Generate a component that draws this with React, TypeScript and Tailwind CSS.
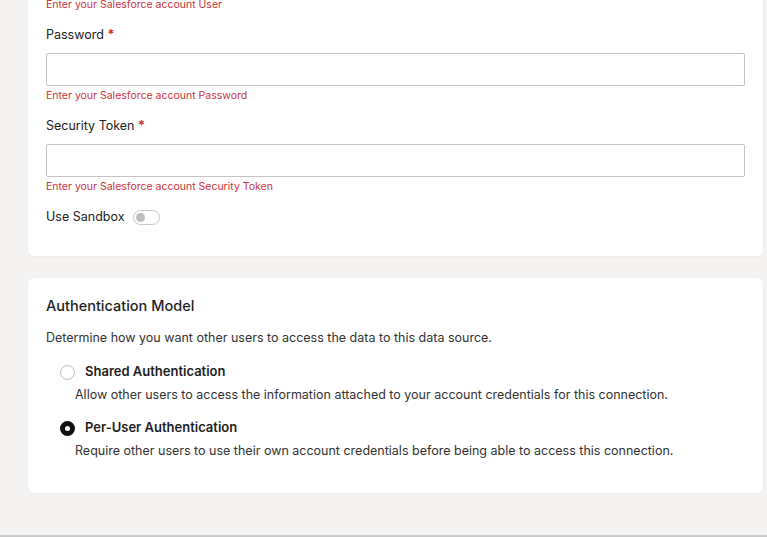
import React, { useState } from 'react'

const FIELDS = [
  { label: 'Password', help: 'Enter your Salesforce account Password' },
  { label: 'Security Token', help: 'Enter your Salesforce account Security Token' },
]

const AUTH_OPTIONS = [
  {
    id: 'shared',
    title: 'Shared Authentication',
    desc: 'Allow other users to access the information attached to your account credentials for this connection.',
  },
  {
    id: 'per-user',
    title: 'Per-User Authentication',
    desc: 'Require other users to use their own account credentials before being able to access this connection.',
  },
]

function Field({ label, help }: { label: string; help: string }) {
  return (
    <div className="mt-[16px]">
      <label className="block text-[12.5px] leading-[16px] text-[#222]">
        {label} <span className="text-[#d02b2b] font-bold">*</span>
      </label>
      <input className="mt-[10px] block w-full h-[33px] border border-[#c4c4c4] rounded-[2px] bg-white px-2 text-[13px] outline-none" />
      <p className="mt-[3px] text-[10.5px] leading-[13px] text-[#c8333c]">{help}</p>
    </div>
  )
}

export default function App() {
  const [sandbox, setSandbox] = useState(false)
  const [auth, setAuth] = useState('per-user')

  return (
    <div className="h-[537px] bg-[#f4f3f1] border-b-2 border-[#c9c9c9] overflow-hidden font-['Inter',sans-serif]">
      <div className="pl-[28px] pr-[4px]">

        {/* ── Connection details ── */}
        <div className="bg-white rounded-b-[6px] shadow-[0_1px_3px_rgba(0,0,0,0.04)] px-[18px] pb-[31px]">
          <p className="-mt-[2px] text-[10.5px] leading-[13px] text-[#c8333c]">Enter your Salesforce account User</p>
          {FIELDS.map(f => <Field key={f.label} {...f} />)}

          <div className="mt-[16px] flex items-center gap-[9px]">
            <span className="text-[12.5px] leading-[16px] text-[#222]">Use Sandbox</span>
            <button
              onClick={() => setSandbox(!sandbox)}
              className={`relative w-[27px] h-[15px] rounded-full border ${sandbox ? 'bg-[#222] border-[#222]' : 'bg-white border-[#c8c8c8]'}`}
            >
              <span className={`absolute top-[2px] w-[9px] h-[9px] rounded-full ${sandbox ? 'left-[14px] bg-white' : 'left-[2px] bg-[#bdbdbd]'}`} />
            </button>
          </div>
        </div>

        {/* ── Authentication model ── */}
        <div className="mt-[22px] bg-white rounded-[6px] shadow-[0_1px_3px_rgba(0,0,0,0.04)] px-[18px] pt-[19px] pb-[34px]">
          <h2 className="text-[14.5px] leading-[18px] font-medium text-[#1e1e1e]">Authentication Model</h2>
          <p className="mt-[15px] text-[12.5px] leading-[16px] text-[#333]">
            Determine how you want other users to access the data to this data source.
          </p>

          <div className="mt-[16px] pl-[14px] space-y-[15px]">
            {AUTH_OPTIONS.map(o => (
              <div key={o.id} className="cursor-pointer" onClick={() => setAuth(o.id)}>
                <div className="flex items-center gap-[10px]">
                  <span
                    className={`w-[15px] h-[15px] rounded-full flex-shrink-0 mt-[3px] ${auth === o.id ? 'border-[5px] border-[#111]' : 'border border-[#bdbdbd]'}`}
                  />
                  <span className="text-[13px] leading-[16px] font-semibold text-[#1e1e1e]">{o.title}</span>
                </div>
                <p className="mt-[7px] pl-[15px] text-[12.5px] leading-[16px] text-[#333]">{o.desc}</p>
              </div>
            ))}
          </div>
        </div>

      </div>
    </div>
  )
}
